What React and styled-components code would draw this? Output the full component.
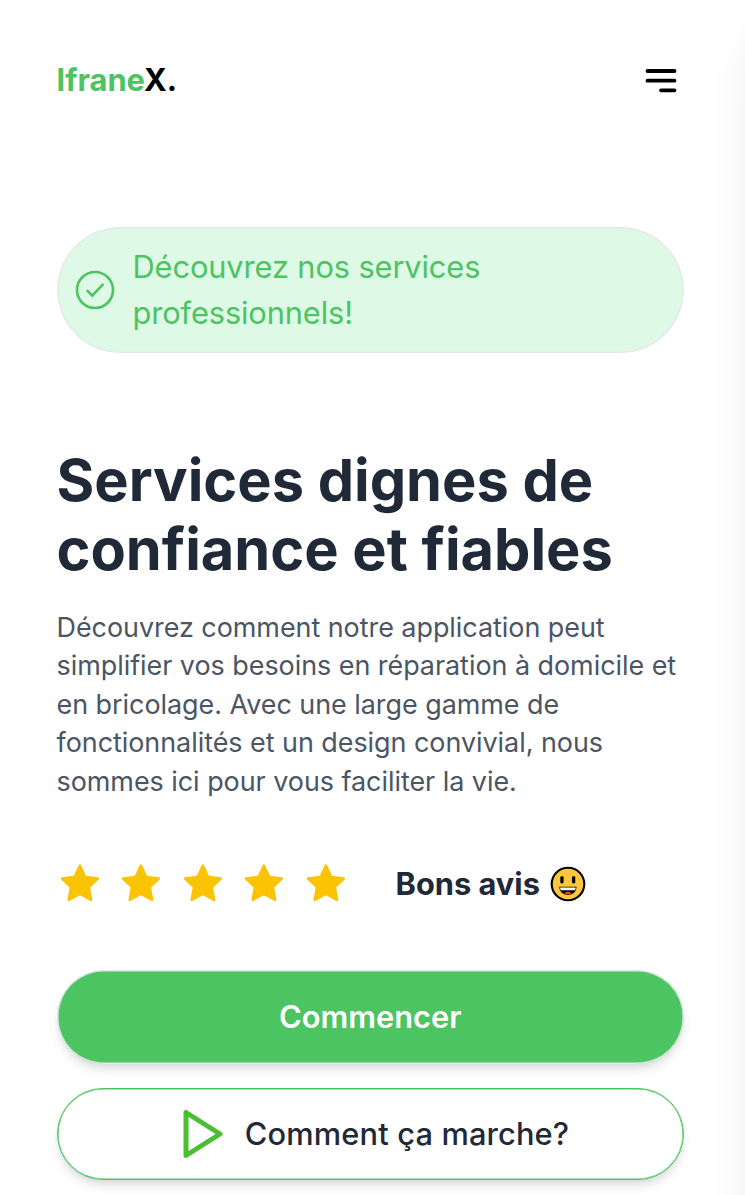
import React from "react";
import styled, { createGlobalStyle } from "styled-components";

const GlobalStyle = createGlobalStyle`
  *, *::before, *::after { box-sizing: border-box; }
  html, body { margin: 0; background: #fff; overflow: hidden; }
  body { font-family: Inter, "Liberation Sans", sans-serif; color: #1f2937; }
  h1, p { margin: 0; }
  svg { display: block; flex: none; }
`;

const Page = styled.div`
  position: relative;
  width: 745px;
  height: 1195px;
  padding: 0 61px 0 56.5px;
  overflow: hidden;
  background: #fff;
`;

const DrawerShadow = styled.div`
  position: absolute;
  top: 0;
  left: 100%;
  width: 300px;
  height: 1300px;
  box-shadow: 0 38px 48px -10px rgba(0, 0, 0, 0.08), 0 15px 19px -12px rgba(0, 0, 0, 0.1);
`;

const Header = styled.header`
  display: flex;
  align-items: center;
  justify-content: space-between;
  height: 160px;
  padding-right: 7px;
`;

const Logo = styled.div`
  color: #000;
  font-size: 30.8px;
  font-weight: 700;
  line-height: 46px;
`;

const LogoAccent = styled.span`
  color: #4cc461;
`;

const MenuButton = styled.button`
  padding: 2px 0 0;
  border: 0;
  background: none;
`;

const Notice = styled.div`
  display: flex;
  align-items: center;
  gap: 17.5px;
  height: 126px;
  margin-top: 67px;
  padding: 0 17.5px;
  border: 1px solid #e5e7eb;
  border-radius: 63px;
  background: #dff9e7;
  box-shadow: inset 0 0 0 0.5px #e5e7eb;
  color: #4cc461;
`;

const NoticeText = styled.p`
  font-size: 30.8px;
  font-weight: 400;
  line-height: 46.2px;
  letter-spacing: -0.12px;
`;

const Title = styled.h1`
  margin-top: 93px;
  font-size: 57.75px;
  font-weight: 700;
  line-height: 69.3px;
  letter-spacing: -0.02px;
  white-space: nowrap;
`;

const Description = styled.p`
  margin-top: 24px;
  color: #4b5563;
  font-size: 26.95px;
  font-weight: 400;
  line-height: 38.5px;
  letter-spacing: -0.04px;
  white-space: nowrap;
`;

const Reviews = styled.div`
  display: flex;
  align-items: center;
  height: 46px;
  margin-top: 60px;
`;

const Stars = styled.div`
  display: flex;
  gap: 15.4px;
  padding-bottom: 2px;
`;

const ReviewLabel = styled.span`
  margin: 0 10px 0 46.5px;
  font-size: 30.8px;
  font-weight: 700;
  line-height: 46px;
  white-space: nowrap;
`;

const Actions = styled.div`
  display: flex;
  flex-direction: column;
  gap: 24px;
  margin-top: 63px;
`;

const Button = styled.button`
  display: flex;
  align-items: center;
  justify-content: center;
  gap: 22px;
  width: 100%;
  height: ${(p) => (p.$primary ? "94px" : "91.5px")};
  padding: ${(p) => (p.$primary ? "0" : "0 0 0 11.5px")};
  border: 1px solid ${(p) => (p.$primary ? "#e5e7eb" : "#4cc461")};
  border-radius: 48px;
  background: ${(p) => (p.$primary ? "#4cc461" : "#fff")};
  color: ${(p) => (p.$primary ? "#fff" : "#1f2937")};
  font: ${(p) => (p.$primary ? 600 : 500)} 30.8px / 46px Inter, "Liberation Sans", sans-serif;
  letter-spacing: ${(p) => (p.$primary ? "0" : "0.15px")};
  box-shadow:
    inset 0 0 0 0.5px ${(p) => (p.$primary ? "#e5e7eb" : "#4cc461")},
    0 7.7px 11.5px -2px rgba(0, 0, 0, 0.1),
    0 4px 8px -4px rgba(0, 0, 0, 0.1);
`;

const MenuIcon = () => (
  <svg width="32" height="26" viewBox="0 0 32 26" stroke="#000" strokeWidth="3.8" strokeLinecap="round">
    <path d="M2.5 3H29.5M2.5 12.7H29.5M16 22.3H29.5" />
  </svg>
);

const CheckIcon = () => (
  <svg width="40" height="40" viewBox="0 0 40 40" fill="none" stroke="#4cc461" strokeWidth="2.6" strokeLinecap="round">
    <circle cx="20" cy="20" r="18" />
    <path d="m12.5 20.8 4.8 4.8 10.4-11" />
  </svg>
);

const StarIcon = () => (
  <svg width="46.2" height="46.2" viewBox="0 0 24 24" fill="#fac402">
    <path d="M12.52 2.7 15.1 8.2 21.25 9c.58.07.82.73.4 1.12l-4.4 4.2 1.12 6.28c.1.54-.46.96-.95.7L11.9 18.3l-5.52 3c-.49.26-1.05-.16-.95-.7l1.12-6.28-4.4-4.2c-.42-.39-.18-1.05.4-1.12l6.15-.8 2.58-5.5c.27-.57.97-.57 1.24 0Z" />
  </svg>
);

const SmileIcon = () => (
  <svg width="36" height="36" viewBox="0 0 36 36">
    <circle cx="18" cy="18" r="16.3" fill="#fcc73c" stroke="#000" strokeWidth="2.1" />
    <rect x="10.3" y="10.2" width="3.3" height="7.3" rx="1.4" />
    <rect x="22" y="10.2" width="3.3" height="7.3" rx="1.4" />
    <path d="M9.3 20.8h17.2c0 4.8-3.8 8.2-8.6 8.2s-8.6-3.4-8.6-8.2Z" fill="#000" />
    <path d="M10.1 21.5h15.6c0 1.1-.3 2-.7 2.7H10.8c-.4-.7-.7-1.6-.7-2.7Z" fill="#fff" />
    <path d="M14.7 27.8c.8-2.6 5.6-2.6 6.4 0-1.9 1-4.5 1-6.4 0Z" fill="#f5401c" />
  </svg>
);

const PlayIcon = () => (
  <svg width="40" height="50" viewBox="0 0 40 50" fill="none" stroke="#4abf32" strokeWidth="5" strokeLinejoin="round">
    <path d="M3 3.5v43L37 25Z" />
  </svg>
);

export default function App() {
  return (
    <>
      <GlobalStyle />
      <Page>
        <DrawerShadow />
        <Header>
          <Logo><LogoAccent>Ifrane</LogoAccent>X.</Logo>
          <MenuButton aria-label="Menu"><MenuIcon /></MenuButton>
        </Header>
        <Notice>
          <CheckIcon />
          <NoticeText>Découvrez nos services<br />professionnels!</NoticeText>
        </Notice>
        <Title>Services dignes de<br />confiance et fiables</Title>
        <Description>
          Découvrez comment notre application peut<br />
          simplifier vos besoins en réparation à domicile et<br />
          en bricolage. Avec une large gamme de<br />
          fonctionnalités et un design convivial, nous<br />
          sommes ici pour vous faciliter la vie.
        </Description>
        <Reviews>
          <Stars>{[0, 1, 2, 3, 4].map((n) => <StarIcon key={n} />)}</Stars>
          <ReviewLabel>Bons avis</ReviewLabel>
          <SmileIcon />
        </Reviews>
        <Actions>
          <Button $primary>Commencer</Button>
          <Button><PlayIcon />Comment ça marche?</Button>
        </Actions>
      </Page>
    </>
  );
}
